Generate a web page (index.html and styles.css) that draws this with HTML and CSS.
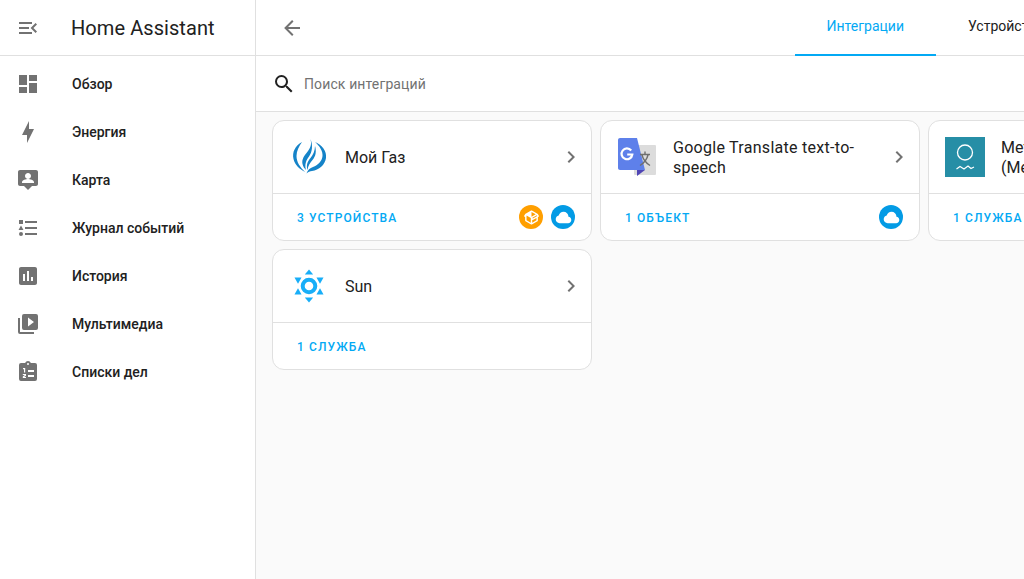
FILE: index.html
```html
<!DOCTYPE html>
<html lang="ru">
<head>
<meta charset="utf-8">
<title>Home Assistant</title>
<link rel="stylesheet" href="styles.css">
</head>
<body>
<div class="app">
  <aside class="sidebar">
    <div class="side-head">
      <svg class="icon gray" viewBox="0 0 24 24"><path d="M21,15.61L19.59,17L14.58,12L19.59,7L21,8.39L17.44,12L21,15.61M3,6H16V8H3V6M3,13V11H13V13H3M3,18V16H16V18H3Z"/></svg>
      <span class="brand">Home Assistant</span>
    </div>
    <nav class="nav">
      <a class="nav-item"><svg class="icon gray" viewBox="0 0 24 24"><path d="M13,3V9H21V3M13,21H21V11H13M3,21H11V15H3M3,13H11V3H3V13Z"/></svg><span>Обзор</span></a>
      <a class="nav-item"><svg class="icon gray" viewBox="0 0 24 24"><path d="M11 15H6L13 1V9H18L11 23V15Z"/></svg><span>Энергия</span></a>
      <a class="nav-item"><svg class="icon gray" viewBox="0 0 24 24"><path d="M20 2H4C2.9 2 2 2.9 2 4V16C2 17.1 2.9 18 4 18H8L12 22L16 18H20C21.1 18 22 17.1 22 16V4C22 2.9 21.1 2 20 2M12 5C13.66 5 15 6.34 15 8S13.66 11 12 11 9 9.66 9 8 10.34 5 12 5M18 15H6V14C6 12 10 10.9 12 10.9S18 12 18 14V15Z"/></svg><span>Карта</span></a>
      <a class="nav-item"><svg class="icon gray" viewBox="0 0 24 24"><path d="M5,9.5L7.5,14H2.5L5,9.5M3,4H7V8H3V4M5,20A2,2 0 0,0 7,18A2,2 0 0,0 5,16A2,2 0 0,0 3,18A2,2 0 0,0 5,20M9,5V7H21V5H9M9,19H21V17H9V19M9,13H21V11H9V13Z"/></svg><span>Журнал событий</span></a>
      <a class="nav-item"><svg class="icon gray" viewBox="0 0 24 24"><path d="M9 17H7V10H9V17M13 17H11V7H13V17M17 17H15V13H17V17M19 3H5C3.9 3 3 3.9 3 5V19C3 20.1 3.9 21 5 21H19C20.1 21 21 20.1 21 19V5C21 3.9 20.1 3 19 3Z"/></svg><span>История</span></a>
      <a class="nav-item"><svg class="icon gray" viewBox="0 0 24 24"><path d="M4,6H2V20A2,2 0 0,0 4,22H18V20H4M20,2H8A2,2 0 0,0 6,4V16A2,2 0 0,0 8,18H20A2,2 0 0,0 22,16V4A2,2 0 0,0 20,2M12,14.5V5.5L18,10L12,14.5Z"/></svg><span>Мультимедиа</span></a>
      <a class="nav-item"><svg class="icon gray" viewBox="0 0 24 24"><path fill-rule="evenodd" d="M19,3H14.82C14.4,1.84 13.3,1 12,1C10.7,1 9.6,1.84 9.18,3H5A2,2 0 0,0 3,5V19A2,2 0 0,0 5,21H19A2,2 0 0,0 21,19V5A2,2 0 0,0 19,3M12,3A1,1 0 0,1 13,4A1,1 0 0,1 12,5A1,1 0 0,1 11,4A1,1 0 0,1 12,3ZM12,10H18V12H12ZM12,15H18V17H12ZM7,8H9.2V12.5H8V9.2H7ZM6.8,14H10V15.8L8.2,17H10V18H6.8V16.4L8.8,15H6.8Z"/></svg><span>Списки дел</span></a>
    </nav>
  </aside>
  <main class="main">
    <header class="toolbar">
      <button class="back"><svg class="icon gray" viewBox="0 0 24 24"><path d="M20,11V13H8L13.5,18.5L12.08,19.92L4.16,12L12.08,4.08L13.5,5.5L8,11H20Z"/></svg></button>
      <div class="tabs">
        <a class="tab active">Интеграции</a>
        <a class="tab">Устройства</a>
        <a class="tab">Объекты</a>
      </div>
    </header>
    <div class="search">
      <svg class="icon dark" viewBox="0 0 24 24"><path d="M9.5,3A6.5,6.5 0 0,1 16,9.5C16,11.11 15.41,12.59 14.44,13.73L14.71,14H15.5L20.5,19L19,20.5L14,15.5V14.71L13.73,14.44C12.59,15.41 11.11,16 9.5,16A6.5,6.5 0 0,1 3,9.5A6.5,6.5 0 0,1 9.5,3M9.5,5C7,5 5,7 5,9.5C5,12 7,14 9.5,14C12,14 14,12 14,9.5C14,7 12,5 9.5,5Z"/></svg>
      <span class="placeholder">Поиск интеграций</span>
    </div>
    <section class="grid">
      <article class="card">
        <div class="card-head">
          <svg class="logo" viewBox="0 0 40 40">
            <path class="gas" d="M13 5C6 9 3 15 4.500 22C6 28 10.500 32 16 35C11 30 7.500 25 7.500 19C7.500 14 10 9 13 5Z"/>
            <path class="gas" d="M26 5C33 8 38 14 37 21C36 28 30 33 23 34C21 34.300 19 35 17.500 36.500C18.500 33 21 31 24 30C29 28 33 24.500 33.500 19C34 14 30.500 9 26 5Z"/>
            <path class="gas" d="M21 1C23 6 22 10 19 14C15.500 18.500 12.500 22 13.500 27C14 29.500 15.500 31.500 17 33C15.500 27.500 17 23.500 20 19.500C23 15.500 24.500 8 21 1Z"/>
            <path class="gas" d="M26 9C27.500 14 27 19 23.500 23C21 26 19 28.500 18.500 33C17 28 18.500 24.500 21.500 21C24 18 26 14 26 9Z"/>
          </svg>
          <span class="name">Мой Газ</span>
          <svg class="icon gray" viewBox="0 0 24 24"><path d="M8.59,16.58L13.17,12L8.59,7.41L10,6L16,12L10,18L8.59,16.58Z"/></svg>
        </div>
        <div class="card-foot">
          <a class="link">3 устройства</a>
          <div class="badges">
            <span class="badge orange"><svg viewBox="0 0 24 24"><path d="M2,10.96C1.5,10.68 1.35,10.07 1.63,9.59L3.13,7C3.24,6.8 3.41,6.66 3.6,6.58L11.43,2.18C11.59,2.06 11.79,2 12,2C12.21,2 12.41,2.06 12.57,2.18L20.47,6.62C20.66,6.72 20.82,6.88 20.91,7.08L22.36,9.6C22.64,10.08 22.47,10.69 22,10.96L21,11.54V16.5C21,16.88 20.79,17.21 20.47,17.38L12.57,21.82C12.41,21.94 12.21,22 12,22C11.79,22 11.59,21.94 11.43,21.82L3.53,17.38C3.21,17.21 3,16.88 3,16.5V10.96C2.7,11.13 2.32,11.14 2,10.96M12,4.15V4.15L12,10.85V10.85L17.96,7.5L12,4.15M5,15.91L11,19.29V12.58L5,9.21V15.91M19,15.91V12.69L14,15.59C13.67,15.77 13.3,15.76 13,15.6V19.29L19,15.91M13.85,13.36L20.13,9.73L19.55,8.72L13.27,12.35L13.85,13.36Z"/></svg></span>
            <span class="badge blue"><svg viewBox="0 0 24 24"><path d="M6.5 20Q4.22 20 2.61 18.43 1 16.85 1 14.58 1 12.63 2.17 11.1 3.35 9.57 5.25 9.15 5.88 6.85 7.75 5.43 9.63 4 12 4 14.93 4 16.96 6.04 19 8.07 19 11 20.73 11.2 21.86 12.5 23 13.78 23 15.5 23 17.38 21.69 18.69 20.38 20 18.5 20Z"/></svg></span>
          </div>
        </div>
      </article>
      <article class="card">
        <div class="card-head">
          <svg class="logo" viewBox="0 0 40 40">
            <rect x="17" y="8" width="22" height="30" rx="1" fill="#dcdcdc"/>
            <path d="M20 33V39L28 33Z" fill="#4f45b5"/>
            <path d="M3 1H20L28 33H3C1.900 33 1 32.100 1 31V3C1 1.900 1.900 1 3 1Z" fill="#5e80ea"/>
            <path d="M28 14.500V17M23 17.500H33M25 18C26 22 29 26 33 28.500M31 18C30 22 27 26 23 28.500" fill="none" stroke="#6f6f6f" stroke-width="1.400"/>
            <path d="M14.200 13.500A5.400 5.400 0 1 0 15.300 17.500H10.200" fill="none" stroke="#fff" stroke-width="2.200"/>
          </svg>
          <span class="name wide">Google Translate text-to-speech</span>
          <svg class="icon gray" viewBox="0 0 24 24"><path d="M8.59,16.58L13.17,12L8.59,7.41L10,6L16,12L10,18L8.59,16.58Z"/></svg>
        </div>
        <div class="card-foot">
          <a class="link">1 объект</a>
          <div class="badges">
            <span class="badge blue"><svg viewBox="0 0 24 24"><path d="M6.5 20Q4.22 20 2.61 18.43 1 16.85 1 14.58 1 12.63 2.17 11.1 3.35 9.57 5.25 9.15 5.88 6.85 7.75 5.43 9.63 4 12 4 14.93 4 16.96 6.04 19 8.07 19 11 20.73 11.2 21.86 12.5 23 13.78 23 15.5 23 17.38 21.69 18.69 20.38 20 18.5 20Z"/></svg></span>
          </div>
        </div>
      </article>
      <article class="card">
        <div class="card-head">
          <svg class="logo" viewBox="0 0 40 40">
            <rect width="40" height="40" fill="#268ea6"/>
            <circle cx="20" cy="15.500" r="7.500" fill="none" stroke="#fff" stroke-width="1.300"/>
            <path d="M11.500 32L15 29.500L19 32L23 29L26 31.500L29 30" fill="none" stroke="#fff" stroke-width="1.200"/>
          </svg>
          <span class="name">Meteorologisk institutt (Met.no)</span>
          <svg class="icon gray" viewBox="0 0 24 24"><path d="M8.59,16.58L13.17,12L8.59,7.41L10,6L16,12L10,18L8.59,16.58Z"/></svg>
        </div>
        <div class="card-foot">
          <a class="link">1 служба</a>
        </div>
      </article>
      <article class="card">
        <div class="card-head">
          <svg class="logo" viewBox="0 0 40 40">
            <circle cx="20" cy="20" r="6.300" fill="none" stroke="#18aef8" stroke-width="4"/>
            <path class="sun" d="M20 3.500L24.200 8.500H15.800Z"/>
            <path class="sun" d="M20 36.500L24.200 31.500H15.800Z"/>
            <path class="sun" d="M5.500 11.500H12.500L9 17.800Z"/>
            <path class="sun" d="M34.500 11.500H27.500L31 17.800Z"/>
            <path class="sun" d="M5.500 28.500H12.500L9 22.200Z"/>
            <path class="sun" d="M34.500 28.500H27.500L31 22.200Z"/>
          </svg>
          <span class="name">Sun</span>
          <svg class="icon gray" viewBox="0 0 24 24"><path d="M8.59,16.58L13.17,12L8.59,7.41L10,6L16,12L10,18L8.59,16.58Z"/></svg>
        </div>
        <div class="card-foot">
          <a class="link">1 служба</a>
        </div>
      </article>
    </section>
  </main>
</div>
</body>
</html>
```
FILE: styles.css
```css
* { box-sizing: border-box; }
html, body { margin: 0; height: 100%; overflow: hidden; }
body { font-family: Roboto, "Noto Sans", sans-serif; color: #212121; background: #fafafa; }

.app { display: flex; width: 1024px; height: 579px; overflow: hidden; }

.icon { width: 24px; height: 24px; flex: none; display: block; }
.gray { fill: #727272; }
.dark { fill: #212121; }

.sidebar { width: 256px; flex: none; background: #fff; border-right: 1px solid #e0e0e0; }
.side-head { height: 56px; display: flex; align-items: center; padding-left: 16px; border-bottom: 1px solid #e0e0e0; }
.brand { margin-left: 31px; font-size: 20px; font-weight: 400; letter-spacing: 0.07px; }
.nav { display: flex; flex-direction: column; padding-top: 4px; }
.nav-item { height: 48px; display: flex; align-items: center; padding-left: 16px; font-size: 14px; font-weight: 500; }
.nav-item span { margin-left: 32px; }

.main { flex: 1; min-width: 0; display: flex; flex-direction: column; }
.toolbar { height: 56px; flex: none; display: flex; background: #fff; border-bottom: 1px solid #e0e0e0; }
.back { width: 24px; height: 24px; margin: 16px 0 0 24px; padding: 0; border: 0; background: none; }
.tabs { display: flex; margin-left: 491px; flex: none; }
.tab { height: 56px; padding: 0 31.5px; font-size: 14px; line-height: 53px; white-space: nowrap; }
.tab + .tab { padding-left: 32.5px; }
.tab.active { color: #03a9f4; border-bottom: 2px solid #03a9f4; }

.search { height: 56px; flex: none; display: flex; align-items: center; padding-left: 16px; background: #fff; border-bottom: 1px solid #e0e0e0; }
.placeholder { margin-left: 8px; font-size: 14px; letter-spacing: 0.12px; color: #727272; }

.grid { display: grid; grid-template-columns: repeat(3, 320px); grid-auto-rows: 121px; gap: 8px; padding: 8px 16px; }
.card { display: flex; flex-direction: column; background: #fff; border: 1px solid #e0e0e0; border-radius: 12px; overflow: hidden; }
.card-head { height: 73px; flex: none; display: flex; align-items: center; padding: 0 8px 0 16px; border-bottom: 1px solid #e0e0e0; }
.logo { width: 40px; height: 40px; flex: none; display: block; }
.name { flex: 1; min-width: 0; margin: 0 16px; padding-top: 1px; font-size: 16px; line-height: 20px; }
.wide { letter-spacing: 0.28px; }
.gas { fill: #1583c8; }
.sun { fill: #18aef8; }

.card-foot { flex: 1; display: flex; align-items: center; justify-content: space-between; padding: 0 16px 0 24px; }
.link { padding-top: 2px; font-size: 12px; font-weight: 500; letter-spacing: 1.1px; text-transform: uppercase; color: #03a9f4; white-space: nowrap; }
.badges { display: flex; gap: 8px; }
.badge { width: 24px; height: 24px; border-radius: 50%; display: flex; align-items: center; justify-content: center; }
.badge svg { width: 17px; height: 17px; fill: #fff; display: block; }
.orange { background: #ff9f00; }
.blue { background: #039be5; }
```
